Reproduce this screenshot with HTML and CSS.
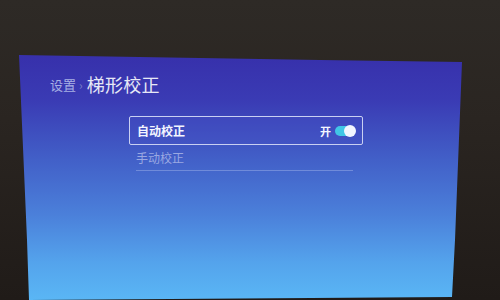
FILE: index.html
```html
<!DOCTYPE html>
<html lang="zh">
<head>
<meta charset="utf-8">
<link rel="stylesheet" href="styles.css">
</head>
<body>
<div class="room">
  <div class="screen">
    <div class="crumbs">
      <span class="parent">设置</span>
      <span class="sep">›</span>
      <span class="title">梯形校正</span>
    </div>
    <div class="menu">
      <div class="item active">
        <span class="label">自动校正</span>
        <span class="state">开</span>
        <span class="toggle"><span class="knob"></span></span>
      </div>
      <div class="item plain">
        <span class="label">手动校正</span>
      </div>
    </div>
  </div>
</div>
</body>
</html>
```
FILE: styles.css
```css
html, body {
  margin: 0;
  padding: 0;
}
body {
  width: 500px;
  height: 300px;
  overflow: hidden;
  font-family: "Noto Sans CJK SC", "Noto Sans", sans-serif;
}
.room {
  width: 500px;
  height: 300px;
  background: linear-gradient(180deg, #2e2a26 0%, #2a2521 40%, #201b18 100%);
}
.screen {
  width: 500px;
  height: 300px;
  box-sizing: border-box;
  padding: 72px 0 0 50px;
  background: linear-gradient(180deg, #3730ab 55px, #3a3bb4 100px, #4260c8 160px, #4b80da 215px, #54a3ec 262px, #5ab6f5 300px);
  clip-path: polygon(19px 55px, 320px 60px, 462px 62px, 455px 240px, 452px 297px, 29px 300px, 27px 240px);
}
.crumbs {
  display: flex;
  align-items: center;
  height: 24px;
}
.parent {
  font-size: 13px;
  color: #a8b0e4;
}
.sep {
  font-size: 12px;
  color: #7a80c8;
  margin: 0 4px 0 3px;
}
.title {
  font-size: 18px;
  color: #e6e8f6;
  letter-spacing: 0.3px;
}
.menu {
  margin: 20px 0 0 79px;
  width: 234px;
}
.item {
  display: flex;
  align-items: center;
  box-sizing: border-box;
}
.active {
  height: 29px;
  padding: 0 7px;
  border: 1.5px solid #c9d0f2;
  border-radius: 2px;
  background: rgba(70, 80, 200, 0.25);
}
.active .label {
  flex: 1;
  font-size: 12px;
  font-weight: bold;
  color: #f4f6ff;
}
.state {
  font-size: 11px;
  font-weight: bold;
  color: #f4f6ff;
  margin-right: 4px;
}
.toggle {
  display: flex;
  justify-content: flex-end;
  align-items: center;
  width: 20px;
  height: 10px;
  border-radius: 5px;
  background: #41c6e6;
}
.knob {
  width: 12px;
  height: 12px;
  margin-right: -1px;
  border-radius: 50%;
  background: #f2f6ff;
}
.plain {
  height: 26px;
  margin: 0 10px 0 7px;
  border-bottom: 1px solid rgba(150, 170, 230, 0.55);
}
.plain .label {
  font-size: 12px;
  color: #9aa8e2;
}
```
